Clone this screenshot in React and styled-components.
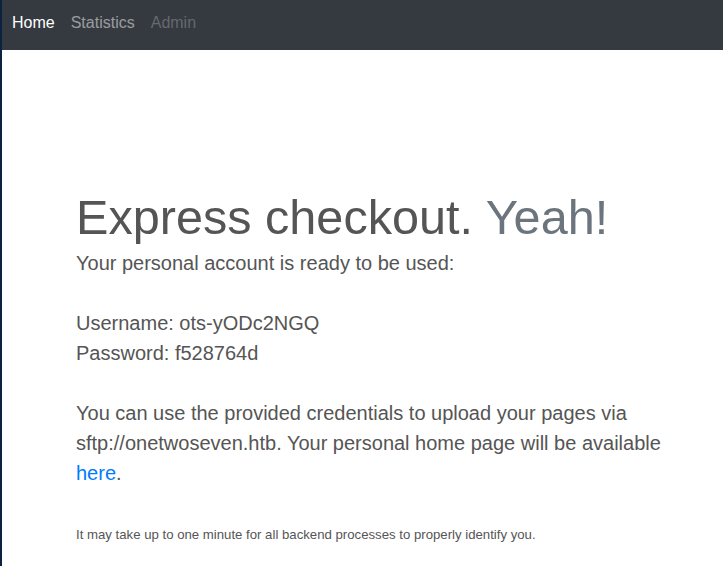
import React from 'react';
import styled, { createGlobalStyle } from 'styled-components';

const GlobalStyle = createGlobalStyle`
  html, body {
    margin: 0;
    padding: 0;
    background: #ffffff;
  }
  body {
    font-family: "Liberation Sans", Arial, sans-serif;
    font-size: 16px;
    line-height: 1.5;
    color: #555555;
  }
`;

const Page = styled.div`
  min-height: 566px;
  border-left: 2px solid #0b2340;
  box-sizing: border-box;
`;

const Navbar = styled.nav`
  display: flex;
  align-items: flex-start;
  height: 50px;
  padding: 11px 2px 0;
  box-sizing: border-box;
  background: #343a40;
`;

const NavLink = styled.a`
  display: block;
  padding: 0 8px;
  font-size: 16px;
  line-height: 24px;
  text-decoration: none;
  color: ${p => (p.$active ? '#ffffff' : p.$disabled ? 'rgba(255,255,255,0.25)' : 'rgba(255,255,255,0.5)')};
`;

const Main = styled.main`
  padding: 138px 0 0 74px;
`;

const Heading = styled.h1`
  margin: 0 0 2px;
  font-size: 48.6px;
  font-weight: 300;
  line-height: 1.2;
  color: #555555;
`;

const Muted = styled.span`
  color: #6c757d;
`;

const Lead = styled.p`
  margin: 0;
  font-size: 20px;
  font-weight: 300;
  line-height: 30px;
  color: #555555;
`;

const Link = styled.a`
  color: #007bff;
  text-decoration: none;
`;

const Note = styled.small`
  display: block;
  margin-top: 37px;
  font-size: 13.2px;
  line-height: 20px;
  color: #555555;
`;

export default function App() {
  return (
    <Page>
      <GlobalStyle />
      <Navbar>
        <NavLink href="#" $active>Home</NavLink>
        <NavLink href="#">Statistics</NavLink>
        <NavLink href="#" $disabled>Admin</NavLink>
      </Navbar>
      <Main>
        <Heading>
          Express checkout. <Muted>Yeah!</Muted>
        </Heading>
        <Lead>
          Your personal account is ready to be used:
          <br />
          <br />
          Username: ots-yODc2NGQ
          <br />
          Password: f528764d
          <br />
          <br />
          You can use the provided credentials to upload your pages via
          <br />
          sftp://onetwoseven.htb. Your personal home page will be available
          <br />
          <Link href="#">here</Link>.
        </Lead>
        <Note>It may take up to one minute for all backend processes to properly identify you.</Note>
      </Main>
    </Page>
  );
}
